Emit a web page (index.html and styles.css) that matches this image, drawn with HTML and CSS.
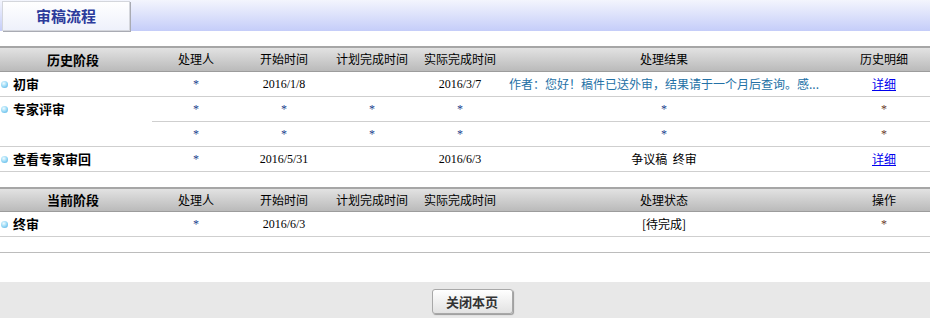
FILE: index.html
```html
<!DOCTYPE html>
<html lang="zh-CN">
<head>
	<meta charset="UTF-8">
	<title>审稿流程</title>
	<link rel="stylesheet" href="styles.css">
</head>
<body>
	<div class="tabbar">
		<div class="tab">审稿流程</div>
	</div>
	<div class="page">
		<table class="flow">
			<colgroup>
				<col class="c-stage"><col class="c-w"><col class="c-w"><col class="c-w"><col class="c-w"><col class="c-result"><col>
			</colgroup>
			<thead>
				<tr>
					<th class="stage-h">历史阶段</th>
					<th>处理人</th>
					<th>开始时间</th>
					<th>计划完成时间</th>
					<th>实际完成时间</th>
					<th>处理结果</th>
					<th>历史明细</th>
				</tr>
			</thead>
			<tbody>
				<tr>
					<td class="stage"><i class="dot"></i>初审</td>
					<td class="star">*</td>
					<td class="date">2016/1/8</td>
					<td></td>
					<td class="date">2016/3/7</td>
					<td class="note">作者：您好！稿件已送外审，结果请于一个月后查询。感...</td>
					<td><a href="#">详细</a></td>
				</tr>
				<tr>
					<td class="stage multi" rowspan="2"><div class="line"><i class="dot"></i>专家评审</div></td>
					<td class="star">*</td>
					<td class="star">*</td>
					<td class="star">*</td>
					<td class="star">*</td>
					<td class="star">*</td>
					<td class="star red">*</td>
				</tr>
				<tr>
					<td class="star">*</td>
					<td class="star">*</td>
					<td class="star">*</td>
					<td class="star">*</td>
					<td class="star">*</td>
					<td class="star red">*</td>
				</tr>
				<tr>
					<td class="stage"><i class="dot"></i>查看专家审回</td>
					<td class="star">*</td>
					<td class="date">2016/5/31</td>
					<td></td>
					<td class="date">2016/6/3</td>
					<td>争议稿&nbsp; 终审</td>
					<td><a href="#">详细</a></td>
				</tr>
			</tbody>
		</table>

		<table class="flow current">
			<colgroup>
				<col class="c-stage"><col class="c-w"><col class="c-w"><col class="c-w"><col class="c-w"><col class="c-result"><col>
			</colgroup>
			<thead>
				<tr>
					<th class="stage-h">当前阶段</th>
					<th>处理人</th>
					<th>开始时间</th>
					<th>计划完成时间</th>
					<th>实际完成时间</th>
					<th>处理状态</th>
					<th>操作</th>
				</tr>
			</thead>
			<tbody>
				<tr>
					<td class="stage"><i class="dot"></i>终审</td>
					<td class="star">*</td>
					<td class="date">2016/6/3</td>
					<td></td>
					<td></td>
					<td>[待完成]</td>
					<td class="star red">*</td>
				</tr>
				<tr class="blank">
					<td colspan="7"></td>
				</tr>
			</tbody>
		</table>

		<div class="bottom">
			<button class="btn">关闭本页</button>
		</div>
	</div>
</body>
</html>
```

FILE: styles.css
```css
html,body{
	margin: 0;
	padding: 0;
	overflow: hidden;
	background: #fff;
	font: 12px/1.2 "Noto Sans CJK SC","Liberation Sans",sans-serif;
	color: #000;
}
.tabbar{
	height: 31px;
	background: linear-gradient(#f3f5fd,#c5cdf9);
}
	.tabbar .tab{
		position: relative;
		top: 1px;
		margin-left: 2px;
		width: 126px;
		height: 28px;
		border: 1px solid #d4d6dc;
		box-shadow: 1px 1px 0 #a9abb3;
		background: linear-gradient(#fff,#eef1fb);
		text-align: center;
		font: bold 15px/28px "Noto Sans CJK SC",sans-serif;
		color: #2c3b9b;
	}
.page{
	width: 944px;
}
.flow{
	width: 100%;
	margin-top: 15px;
	table-layout: fixed;
	border-collapse: separate;
	border-spacing: 0;
}
	.flow .c-stage{ width: 152px; }
	.flow .c-w{ width: 88px; }
	.flow .c-result{ width: 320px; }
	.flow th{
		height: 23px;
		padding: 0;
		border-top: 2px solid #a6a6a6;
		border-bottom: 1px solid #9c9c9c;
		background: linear-gradient(#e2e2e2,#bababa);
		font-weight: normal;
		font-size: 12px;
		text-align: center;
	}
	.flow.current th{
		height: 22px;
	}
		.flow th.stage-h{
			font-weight: bold;
			font-size: 13px;
			padding-right: 6px;
		}
	.flow td{
		height: 24px;
		padding: 0;
		border-bottom: 1px solid #cfcfcf;
		text-align: center;
		white-space: nowrap;
		overflow: hidden;
	}
		.flow td.stage{
			text-align: left;
			font-weight: bold;
			font-size: 13px;
			padding-left: 1px;
		}
		.flow td.multi{
			vertical-align: top;
		}
			.multi .line{
				height: 24px;
				line-height: 24px;
			}
		.flow td.date{
			font-family: "Liberation Serif",serif;
			font-size: 12px;
		}
		.flow td.star{
			font-family: "Liberation Serif",serif;
			color: #22408e;
		}
		.flow td.red{
			color: #6a3a2a;
		}
		.flow td.note{
			text-align: left;
			padding-left: 5px;
			font-size: 12px;
			color: #2471a6;
		}
		.flow a{
			color: #0000ee;
		}
	.flow .blank td{
		height: 15px;
		border-bottom-color: #bcbcbc;
	}
	.dot{
		display: inline-block;
		width: 7px;
		height: 7px;
		margin-right: 5px;
		vertical-align: 1px;
		border-radius: 50%;
		background: radial-gradient(circle at 40% 35%,#f2fcff 0,#9fdcf7 45%,#46a9e0 100%);
	}
.bottom{
	margin-top: 29px;
	height: 36px;
	padding-top: 7px;
	box-sizing: border-box;
	background: #e8e8e8;
	text-align: center;
}
	.bottom .btn{
		width: 81px;
		height: 25px;
		padding: 0;
		border: 1px solid #a8a8a8;
		border-radius: 3px;
		box-shadow: 1px 1px 1px #999;
		background: linear-gradient(#fff,#e2e2e2);
		font: bold 13px/23px "Noto Sans CJK SC",sans-serif;
		color: #333;
	}
```
